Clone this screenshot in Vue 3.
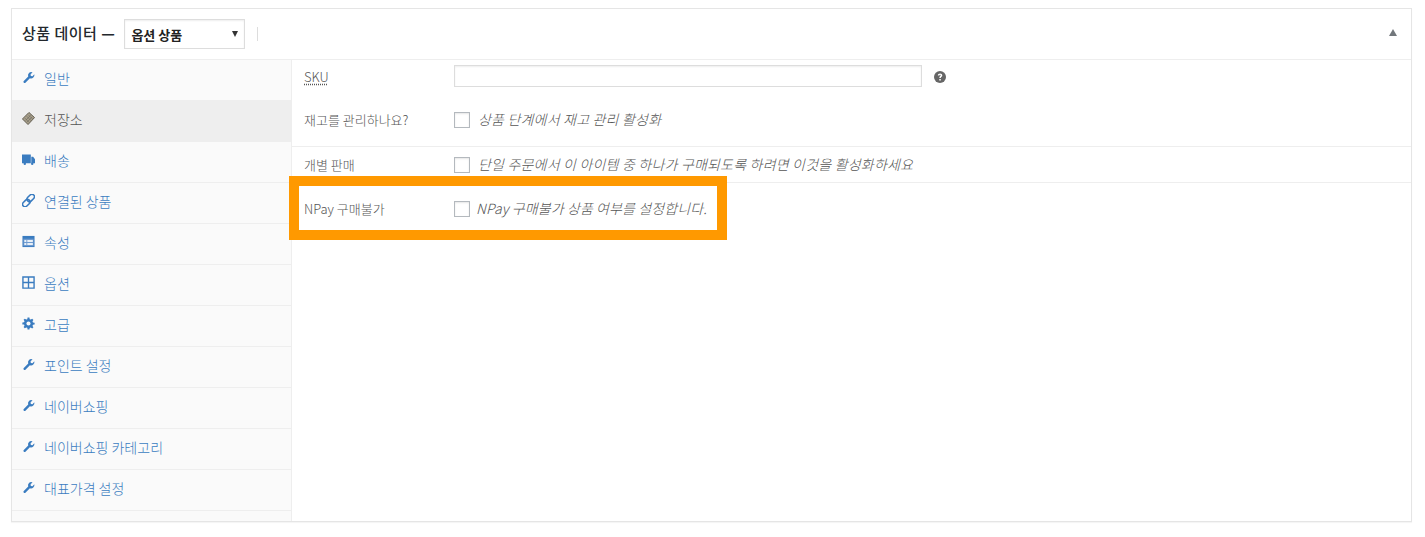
<template>
  <div class="page">
    <div class="metabox">
      <div class="metabox-header">
        <span class="title">상품 데이터 <b>—</b></span>
        <div class="type-select">
          <span>옵션 상품</span>
          <i class="select-arrow"></i>
        </div>
        <span class="divider"></span>
        <i class="toggle-arrow"></i>
      </div>

      <div class="metabox-body">
        <ul class="tabs">
          <li v-for="tab in tabs" :key="tab.label" class="tab" :class="{ active: tab.active }">
            <svg class="tab-icon" viewBox="0 0 14 14" v-html="icons[tab.icon]"></svg>
            <span>{{ tab.label }}</span>
          </li>
          <li class="tab-rest"></li>
        </ul>

        <div class="panel">
          <div class="group first">
            <div class="field sku">
              <label class="sku-label"><span>SKU</span></label>
              <div class="text-input"></div>
              <svg class="help" viewBox="0 0 12 12">
                <circle cx="6" cy="6" r="6" fill="#666"></circle>
                <path d="M3.800 4.600c0-1.400 1.100-2.200 2.300-2.200s2.200.8 2.200 1.900c0 1.500-1.500 1.600-1.500 2.800H5.300c0-1.900 1.400-1.900 1.400-2.800 0-.4-.3-.6-.6-.6-.4 0-.7.300-.7.900zM5.300 8h1.500v1.500H5.300z" fill="#fff"></path>
              </svg>
            </div>
            <div class="field stock">
              <label>재고를 관리하나요?</label>
              <span class="checkbox"></span>
              <em>상품 단계에서 재고 관리 활성화</em>
            </div>
          </div>
          <div class="group">
            <div class="field single">
              <label>개별 판매</label>
              <span class="checkbox"></span>
              <em>단일 주문에서 이 아이템 중 하나가 구매되도록 하려면 이것을 활성화하세요</em>
            </div>
          </div>
          <div class="group npay">
            <div class="field">
              <label>NPay 구매불가</label>
              <span class="checkbox"></span>
              <em class="npay-text">NPay 구매불가 상품 여부를 설정합니다.</em>
            </div>
            <div class="highlight"></div>
          </div>
        </div>
      </div>
    </div>
  </div>
</template>

<script setup>
const wrench = '<g transform="translate(1.300 .6) scale(.9)"><path d="M.7 11.300 6 6A3.900 3.900 0 0 1 11.200 1L8.800 3.200l.3 2 2 .4L13.300 3.300A4 4 0 0 1 8 8l-5.300 5.300a1.400 1.400 0 0 1-2-2z" fill="currentColor"/></g>'

const icons = {
  wrench,
  stock: '<path d="M7.500.5 13.500 6 6.500 13.500.5 7.500z" fill="#a89f8a" stroke="#5a5548" stroke-width="1" stroke-linejoin="round"/><path d="M5 4.500 9.800 9.300M6.800 3 11.300 7.500M3 6.500 7.500 11M9.300 3.500 4 9M11 5.200 5.500 10.800" stroke="#6d6a62" stroke-width=".7"/>',
  truck: '<path d="M0 1.500h9.500v9.500H0zM10 4h2l2 2.700V11h-4z" fill="currentColor"/><circle cx="3" cy="11.500" r="1.300" fill="currentColor"/><circle cx="11" cy="11.500" r="1.300" fill="currentColor"/>',
  link: '<g fill="none" stroke="currentColor" stroke-width="1.700"><rect x="6.700" y="-.3" width="5.400" height="9" rx="2.700" transform="rotate(45 9.400 4.200)"/><rect x="1.900" y="5.300" width="5.400" height="9" rx="2.700" transform="rotate(45 4.600 9.800)"/></g>',
  window: '<path d="M.5 1h13v12H.5z" fill="currentColor"/><path d="M1.500 4h11v8h-11z" fill="#6f9bd0"/><path d="M2.500 5.300h2.200v2.200H2.500zM2.500 8.500h2.200v2.200H2.500zM5.700 5.300h6v2.200h-6zM5.700 8.500h6v2.200h-6z" fill="#e8f0f8"/>',
  grid: '<path d="M1 1h12v12H1zM7 1v12M1 7h12" fill="none" stroke="currentColor" stroke-width="1.500"/>',
  gear: '<path d="M6 .5h2l.3 1.800 1.100.5L11 1.800l1.300 1.300-1 1.500.5 1.200 1.800.3v2l-1.800.3-.5 1.200 1 1.500-1.300 1.300-1.600-1-1.100.5L8 13.500H6l-.3-1.800-1.100-.5-1.600 1-1.300-1.300 1-1.500-.5-1.200L.4 8V6l1.800-.3.500-1.200-1-1.500L3 1.800l1.600 1 1.100-.5z" fill="currentColor"/><circle cx="7" cy="7" r="2.200" fill="#fafafa"/>'
}

const tabs = [
  { label: '일반', icon: 'wrench' },
  { label: '저장소', icon: 'stock', active: true },
  { label: '배송', icon: 'truck' },
  { label: '연결된 상품', icon: 'link' },
  { label: '속성', icon: 'window' },
  { label: '옵션', icon: 'grid' },
  { label: '고급', icon: 'gear' },
  { label: '포인트 설정', icon: 'wrench' },
  { label: '네이버쇼핑', icon: 'wrench' },
  { label: '네이버쇼핑 카테고리', icon: 'wrench' },
  { label: '대표가격 설정', icon: 'wrench' }
]
</script>

<style>
html,
body {
  margin: 0;
  background: #fff;
}
</style>

<style scoped>
.page {
  padding: 8px 13px 15px 11px;
  font-family: "Noto Sans CJK KR", "Liberation Sans", sans-serif;
  font-size: 14px;
  font-weight: 300;
  color: #444;
}

.metabox {
  border: 1px solid #e5e5e5;
  background: #fff;
  box-shadow: 0 1px 1px rgba(0, 0, 0, 0.04);
}

.metabox-header {
  height: 50px;
  display: flex;
  align-items: center;
  padding: 0 11px 0 10px;
  border-bottom: 1px solid #eee;
}

.title {
  font-size: 15px;
  font-weight: 500;
  letter-spacing: 0.5px;
  color: #23282d;
  margin-right: 9px;
  padding-bottom: 3px;
}

.title b {
  font-weight: 700;
}

.type-select {
  width: 121px;
  height: 30px;
  box-sizing: border-box;
  border: 1px solid #ddd;
  box-shadow: inset 0 1px 2px rgba(0, 0, 0, 0.07);
  display: flex;
  align-items: center;
  justify-content: space-between;
  padding: 0 6px;
  font-size: 13px;
  font-weight: 700;
  color: #222;
}

.select-arrow {
  width: 0;
  height: 0;
  border-left: 3px solid transparent;
  border-right: 3px solid transparent;
  border-top: 6px solid #333;
}

.divider {
  width: 1px;
  height: 14px;
  background: #ddd;
  margin-left: 12px;
}

.toggle-arrow {
  margin-left: auto;
  margin-right: 3px;
  margin-bottom: 4px;
  width: 0;
  height: 0;
  border-left: 4px solid transparent;
  border-right: 4px solid transparent;
  border-bottom: 7px solid #72777c;
}

.metabox-body {
  display: flex;
  height: 461px;
}

.tabs {
  width: 279px;
  margin: 0;
  padding: 0;
  list-style: none;
  background: #fafafa;
  border-right: 1px solid #eee;
  display: flex;
  flex-direction: column;
  flex-shrink: 0;
}

.tab {
  height: 40px;
  flex-shrink: 0;
  display: flex;
  align-items: center;
  padding-left: 10px;
  border-bottom: 1px solid #eee;
  color: #3a7cc0;
}

.tab span {
  padding-bottom: 5px;
}

.tab.active {
  background: #eee;
  color: #555;
}

.tab-icon {
  width: 13px;
  height: 13px;
  margin-right: 9px;
  margin-bottom: 5px;
  flex-shrink: 0;
}

.tab-rest {
  flex: 1;
}

.panel {
  flex: 1;
  font-size: 13px;
  color: #555;
}

.group {
  border-bottom: 1px solid #eee;
  position: relative;
}

.group.npay {
  border-bottom: none;
}

.field {
  display: flex;
  align-items: center;
  box-sizing: border-box;
  height: 52px;
  padding-left: 12px;
}

.field label {
  width: 150px;
  flex-shrink: 0;
  padding-bottom: 2px;
}

.field.sku {
  height: 32px;
}

.field .sku-label {
  padding-bottom: 0;
}

.sku-label span {
  text-decoration: underline dotted #555;
  text-underline-offset: 2px;
}

.field.stock {
  margin-top: 2px;
}

.group.first {
  height: 86px;
}

.field.single {
  height: 35px;
  padding-top: 1px;
}

.text-input {
  width: 468px;
  height: 22px;
  box-sizing: border-box;
  border: 1px solid #ddd;
  box-shadow: inset 0 1px 2px rgba(0, 0, 0, 0.07);
}

.help {
  width: 12px;
  height: 12px;
  margin-left: 12px;
  margin-top: 2px;
}

.checkbox {
  width: 16px;
  height: 16px;
  box-sizing: border-box;
  border: 1px solid #b4b9be;
  box-shadow: inset 0 1px 2px rgba(0, 0, 0, 0.1);
  margin-right: 8px;
  flex-shrink: 0;
}

em {
  font-style: italic;
  font-size: 14px;
  letter-spacing: 0.2px;
  color: #555;
  padding-bottom: 3px;
}

.npay-text {
  margin-left: -2px;
  letter-spacing: 0.1px;
}

/* 주황색 강조 박스 */
.highlight {
  position: absolute;
  left: -3px;
  top: -7px;
  width: 438px;
  height: 64px;
  box-sizing: border-box;
  border: 10px solid #ff9900;
  pointer-events: none;
}
</style>
